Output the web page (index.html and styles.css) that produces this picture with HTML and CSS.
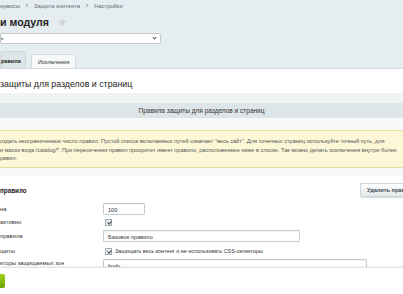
FILE: index.html
```html
<!DOCTYPE html>
<html lang="ru">
<head>
<meta charset="utf-8">
<link rel="stylesheet" href="styles.css">
</head>
<body>
<div class="crumbs"><span>ервисы</span><span class="sep">›</span><span>Защита контента</span><span class="sep">›</span><span>Настройки</span></div>
<div class="title"><h1>и модуля</h1><span class="star">☆</span></div>
<div class="select"><span class="val">ь</span><span class="chev"></span></div>
<div class="tabs"><div class="tab active">равила</div><div class="tab">Исключения</div></div>
<div class="panel">
  <div class="head">защиты для разделов и страниц</div>
  <div class="strip"></div>
  <div class="grayrow">Правила защиты для разделов и страниц</div>
  <div class="gap"></div>
  <div class="note">
    <p>оздать неограниченное число правил. Пустой список включаемых путей означает "весь сайт". Для точечных страниц используйте точный путь, для</p>
    <p>и маски вида /catalog/*. При пересечении правил приоритет имеет правило, расположенное ниже в списке. Так можно делать исключения внутри более</p>
    <p>равил.</p>
  </div>
  <div class="strip2"></div>
  <div class="form">
    <div class="formhead"><span class="rule">правило</span><button class="btn">Удалить прави</button></div>
    <div class="row r1"><span class="lbl">на</span><span class="input short">100</span></div>
    <div class="row r2"><span class="lbl">активно</span><span class="cb"></span></div>
    <div class="row r3"><span class="lbl">правила</span><span class="input mid">Базовое правило</span></div>
    <div class="row r4"><span class="lbl">щиты</span><span class="cb"></span><span class="cbtext">Защищать весь контент и не использовать CSS-селекторы</span></div>
    <div class="row r5"><span class="lbl">кторы защищаемых зон</span><span class="input wide">body</span></div>
  </div>
</div>
<div class="footer"><span class="save"></span></div>
</body>
</html>
```
FILE: styles.css
```css
html, body { margin: 0; padding: 0; }
body {
  background: #e6edf0;
  font-family: "Liberation Sans", Arial, sans-serif;
  color: #333;
  width: 403px;
  height: 294px;
  overflow: hidden;
  position: relative;
}
.crumbs {
  height: 12px;
  line-height: 12px;
  font-size: 5.8px;
  color: #5c6f79;
  display: flex;
}
.crumbs .sep { margin: 0 6px 0 6px; font-size: 6.5px; }
.title {
  height: 20px;
  display: flex;
  align-items: center;
  gap: 9px;
}
.title h1 {
  margin: 0;
  font-size: 10.6px;
  font-weight: bold;
  color: #222;
}
.star { font-size: 9px; color: #888; }
.select {
  margin-top: 1px;
  width: 159px;
  height: 9px;
  border: 1px solid #c3cbce;
  border-radius: 2px;
  background: #fff;
  position: relative;
}
.val {
  position: absolute;
  left: 0;
  top: 0;
  font-size: 5px;
  line-height: 9px;
  color: #555;
}
.chev {
  position: absolute;
  right: 4px;
  top: 2px;
  width: 2px;
  height: 2px;
  border-right: 1px solid #555;
  border-bottom: 1px solid #555;
  transform: rotate(45deg);
}
.tabs {
  margin-top: 7px;
  display: flex;
  align-items: flex-end;
  gap: 5px;
  height: 17px;
}
.tab {
  height: 14px;
  line-height: 14px;
  font-size: 5.5px;
  padding: 0 6px;
  background: #f7f9f9;
  border: 1px solid #d3dadd;
  border-bottom: none;
  box-sizing: border-box;
  color: #333;
  border-radius: 2px 2px 0 0;
}
.tab.active {
  height: 17px;
  line-height: 18px;
  width: 26px;
  padding: 0;
  background: #dde5e8;
  border-color: #d0d8db;
  font-weight: bold;
  color: #222;
}
.panel { background: #fff; }
.head {
  height: 25px;
  padding-top: 10px;
  box-sizing: border-box;
  line-height: 10px;
  font-size: 8.8px;
  color: #222;
  border-top: 1px solid #d5dde0;
}
.strip { height: 10px; background: #f1f4f5; }
.grayrow {
  height: 15px;
  line-height: 15px;
  background: #dde5e8;
  text-align: center;
  font-size: 6.5px;
  color: #333;
}
.gap { height: 12px; background: #f6f8f9; }
.note {
  height: 38px;
  box-sizing: border-box;
  background: #fcf8d7;
  border-top: 1px solid #e6dd9f;
  border-bottom: 1px solid #e6dd9f;
  padding-top: 6px;
  font-size: 5.6px;
  color: #555;
  white-space: nowrap;
  overflow: hidden;
}
.note p { margin: 0; line-height: 8.5px; }
.strip2 { height: 8px; background: #f5f7f8; }
.form { background: #fff; }
.formhead {
  height: 27px;
  display: flex;
  justify-content: space-between;
  align-items: flex-start;
  padding-top: 7px;
  box-sizing: border-box;
}
.rule { font-size: 6.3px; font-weight: bold; color: #222; margin-top: 4px; }
.btn {
  margin: 0;
  width: 43px;
  height: 14px;
  padding: 0 0 0 6px;
  text-align: left;
  font-family: "Liberation Sans", Arial, sans-serif;
  font-size: 5.6px;
  font-weight: bold;
  color: #3e4a50;
  background: linear-gradient(#ffffff, #e3e9eb);
  border: 1px solid #cfd6d9;
  border-right: none;
  border-radius: 2px 0 0 2px;
  box-shadow: 0 1px 1px rgba(0,0,0,0.15);
  white-space: nowrap;
  overflow: hidden;
}
.row {
  display: flex;
  align-items: center;
  font-size: 5.8px;
  color: #333;
  position: relative;
}
.lbl { width: 103px; flex: none; }
.r1 { height: 13px; margin-top: -1px; }
.r2 { height: 14px; }
.r3 { height: 14px; }
.r4 { height: 14px; margin-top: 1px; }
.r5 { height: 16px; align-items: flex-start; padding-top: 1px; box-sizing: border-box; }
.r5 .lbl { margin-top: 1px; }
.input {
  height: 12px;
  line-height: 12px;
  box-sizing: border-box;
  border: 1px solid #c6cdd0;
  border-radius: 1px;
  background: #fff;
  padding-left: 4px;
  font-size: 5.6px;
  color: #333;
  box-shadow: inset 0 1px 1px rgba(0,0,0,0.06);
}
.short { width: 42px; }
.mid { width: 197px; }
.wide { width: 264px; height: 20px; }
.cb {
  width: 5px;
  height: 5px;
  margin-left: 2px;
  border: 1px solid #a4adb1;
  background: #e9eef0;
  position: relative;
}
.cb::after {
  content: "";
  position: absolute;
  left: 1.5px;
  top: 0;
  width: 1.5px;
  height: 3px;
  border-right: 1px solid #444;
  border-bottom: 1px solid #444;
  transform: rotate(40deg);
}
.cbtext { margin-left: 3px; font-size: 5.4px; }
.footer {
  position: absolute;
  left: 0;
  right: 0;
  top: 267px;
  bottom: 0;
  background: #fff;
  border-top: 1px solid #dde3e5;
  box-shadow: 0 -1px 2px rgba(0,0,0,0.06);
}
.save {
  position: absolute;
  left: 0;
  top: 6px;
  width: 5px;
  height: 14px;
  border-radius: 0 2px 2px 0;
  background: linear-gradient(#a5d11d, #6da200);
}
```
